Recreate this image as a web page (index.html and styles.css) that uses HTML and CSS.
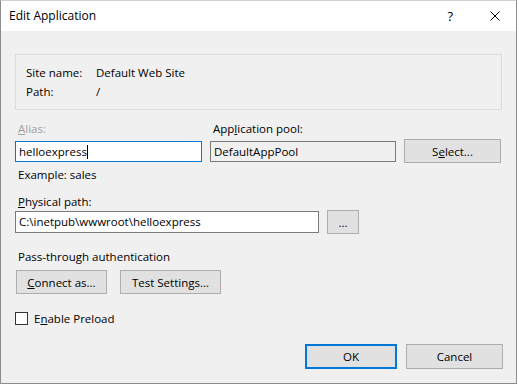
FILE: index.html
```html
<!DOCTYPE html>
<html lang="en">
<head>
    <meta charset="UTF-8">
    <title>Edit Application</title>
    <link rel="stylesheet" href="styles.css">
</head>
<body>
    <div class="window">
        <div class="titlebar">
            <span class="title">Edit Application</span>
            <span class="help">?</span>
            <svg class="close" width="10" height="10" viewBox="0 0 10 10">
                <path d="M0.5 0.5 L9.5 9.5 M9.5 0.5 L0.5 9.5" stroke="#000" stroke-width="1" fill="none"/>
            </svg>
        </div>

        <div class="content">
            <div class="group">
                <div class="info-row"><span class="info-label">Site name:</span><span>Default Web Site</span></div>
                <div class="info-row"><span class="info-label">Path:</span><span>/</span></div>
            </div>

            <div class="alias-grid">
                <label class="disabled"><u>A</u>lias:</label>
                <label>App<u>l</u>ication pool:</label>
                <span></span>
                <div class="textbox focused">helloexpress<span class="caret"></span></div>
                <div class="textbox readonly">DefaultAppPool</div>
                <button class="btn select">S<u>e</u>lect...</button>
            </div>
            <div class="hint">Example: sales</div>

            <label class="section-label"><u>P</u>hysical path:</label>
            <div class="path-row">
                <div class="textbox path">C:\inetpub\wwwroot\helloexpress</div>
                <button class="btn browse">...</button>
            </div>

            <div class="section-label auth">Pass-through authentication</div>
            <div class="auth-row">
                <button class="btn connect"><u>C</u>onnect as...</button>
                <button class="btn test">Test Settin<u>g</u>s...</button>
            </div>

            <div class="check-row">
                <span class="checkbox"></span>
                <span>E<u>n</u>able Preload</span>
            </div>

            <div class="footer">
                <button class="btn ok">OK</button>
                <button class="btn cancel">Cancel</button>
            </div>
        </div>
    </div>
</body>
</html>
```

FILE: styles.css
```css
* {
    margin: 0;
    padding: 0;
    box-sizing: border-box;
}

body {
    background: #ffffff;
    font-family: "Open Sans", "Noto Sans", sans-serif;
    font-size: 11.5px;
    color: #000;
}

.window {
    width: 517px;
    height: 384px;
    background: #f0f0f0;
    border: 1px solid #8c8c8c;
    border-top-color: #d0d0d0;
}

.titlebar {
    height: 30px;
    background: #fff;
    display: flex;
    align-items: center;
    padding-left: 8px;
}

.title {
    flex: 1;
    font-size: 12px;
    padding-bottom: 1px;
}

.help {
    font-size: 13px;
    margin-right: 37px;
}

.close {
    margin-right: 16px;
}

.content {
    padding: 23px 14px 0 14px;
}

.group {
    width: 487px;
    height: 56px;
    border: 1px solid #dcdcdc;
    padding: 8px 0 0 10px;
}

.info-row {
    display: flex;
    height: 19px;
    line-height: 19px;
}

.info-label {
    width: 70px;
}

label, .hint, .section-label {
    display: block;
    height: 16px;
    line-height: 16px;
    padding-left: 3px;
}

.disabled {
    color: #a0a0a0;
}

.alias-grid {
    margin-top: 11px;
    display: grid;
    grid-template-columns: 187px 186px 97px;
    grid-template-rows: 16px 24px;
    column-gap: 8px;
    row-gap: 2px;
    align-items: center;
}

.textbox {
    height: 21px;
    border: 1px solid #7a7a7a;
    background: #fff;
    line-height: 19px;
    padding-left: 3px;
    white-space: nowrap;
    overflow: hidden;
}

.textbox.focused {
    border-color: #0078d7;
}

.textbox.readonly {
    background: #f0f0f0;
}

.caret {
    display: inline-block;
    width: 1px;
    height: 14px;
    background: #000;
    vertical-align: -3px;
}

.btn {
    height: 24px;
    background: #e1e1e1;
    border: 1px solid #adadad;
    font-family: inherit;
    font-size: 11.5px;
    color: #000;
}

.hint {
    margin-top: 4px;
}

.section-label {
    margin-top: 11px;
}

.path-row {
    display: flex;
    align-items: center;
    gap: 8px;
}

.textbox.path {
    width: 304px;
    height: 22px;
    line-height: 20px;
}

.browse {
    width: 32px;
}

.section-label.auth {
    margin-top: 15px;
}

.auth-row {
    margin-top: 5px;
    display: flex;
    gap: 13px;
    padding-left: 1px;
}

.connect {
    width: 91px;
}

.test {
    width: 101px;
}

.check-row {
    margin-top: 16px;
    display: flex;
    align-items: center;
    gap: 6px;
    height: 16px;
}

.checkbox {
    width: 13px;
    height: 13px;
    border: 1px solid #333;
    background: #fff;
}

.footer {
    margin-top: 18px;
    display: flex;
    justify-content: flex-end;
    gap: 9px;
    width: 488px;
}

.ok {
    width: 92px;
    height: 25px;
    border: 2px solid #0078d7;
}

.cancel {
    width: 97px;
    height: 25px;
}
```
